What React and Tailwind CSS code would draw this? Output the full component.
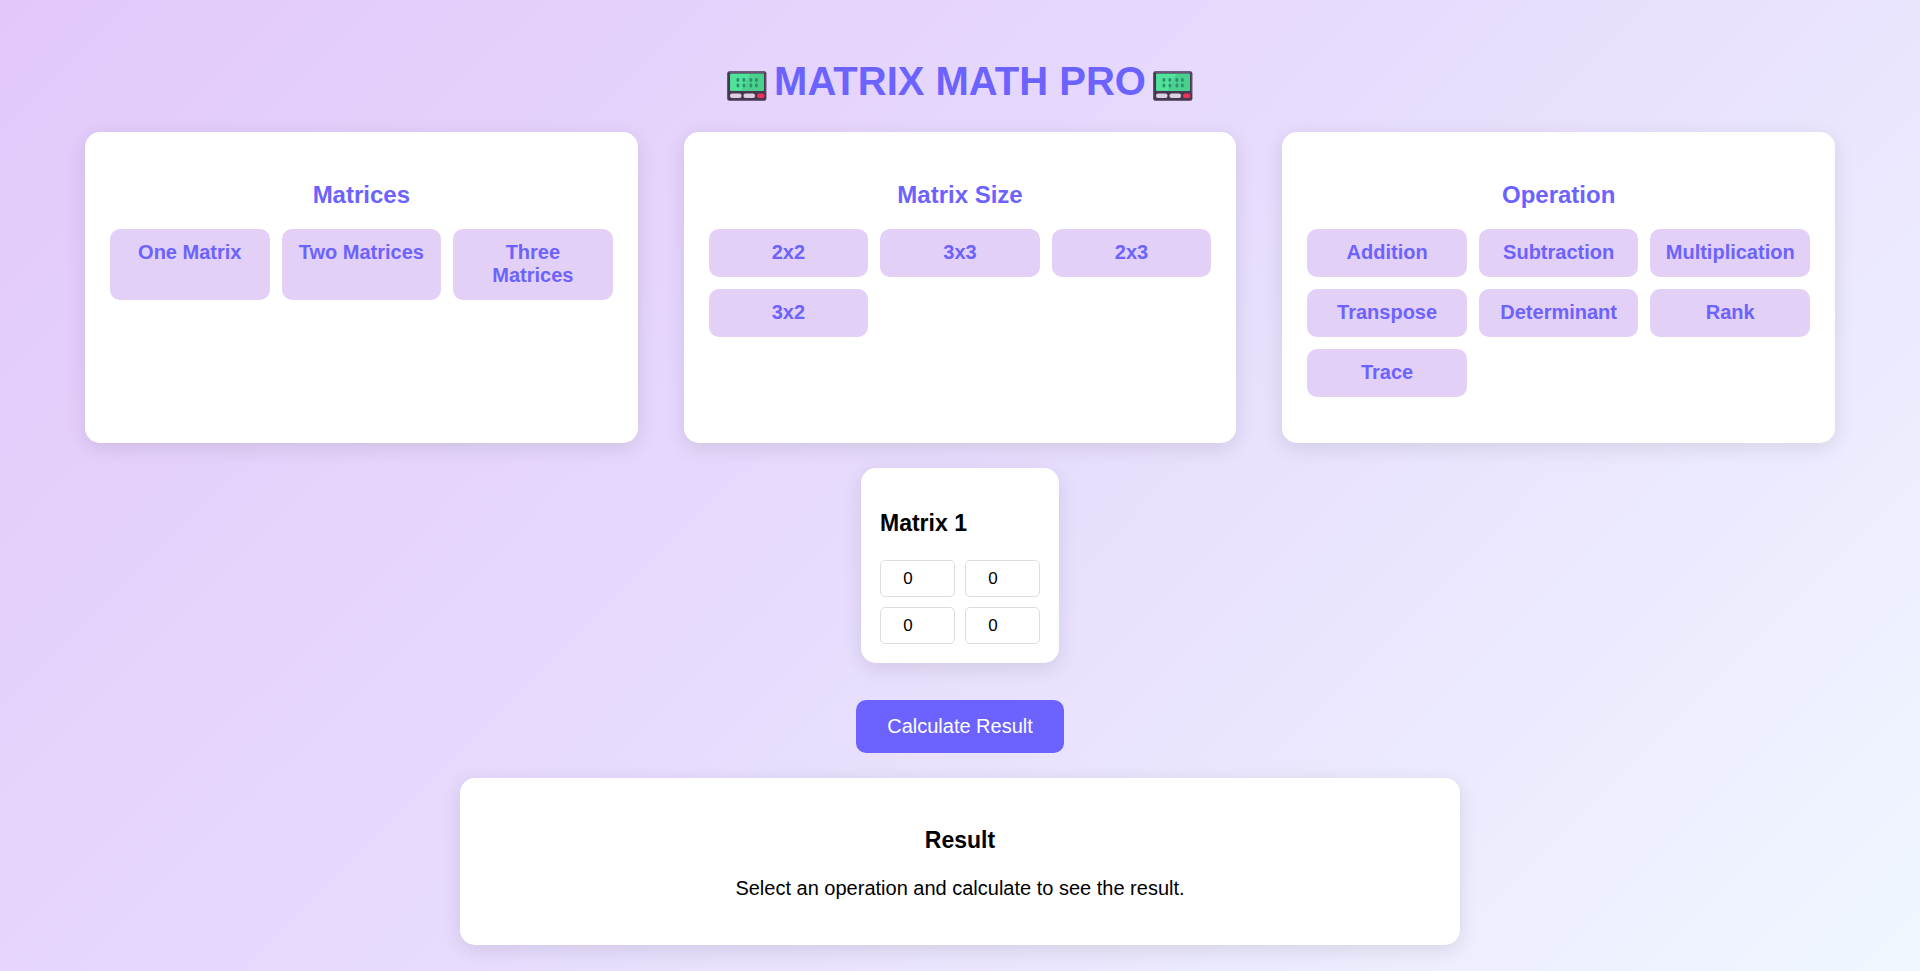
import { useState } from "react";

const groups = [
  { title: "Matrices", options: ["One Matrix", "Two Matrices", "Three Matrices"] },
  { title: "Matrix Size", options: ["2x2", "3x3", "2x3", "3x2"] },
  {
    title: "Operation",
    options: ["Addition", "Subtraction", "Multiplication", "Transpose", "Determinant", "Rank", "Trace"],
  },
];

const CalculatorIcon = () => (
  <svg className="mt-2.5 h-[30px] w-10" viewBox="0 0 40 30" aria-hidden="true">
    <rect x="0.2" y="0.2" width="39.2" height="29.6" rx="2.2" fill="#46384f" />
    <path d="M2 1.3h36" stroke="#75507b" strokeWidth="1.2" />
    <path d="M38.4 2v20" stroke="#644a70" strokeWidth="1" />
    <rect x="3" y="2.5" width="34" height="17.5" rx="1" fill="#49d08f" />
    <path d="M3.5 3h20l-9 16.5h-11z" fill="#4fe39b" />
    <g fill="#2f8f6c">
      {[9.5, 15.5, 22.5, 28].map((x) => (
        <g key={x}>
          <rect x={x} y="7" width="2.8" height="4" rx="1.4" />
          <rect x={x} y="12.5" width="2.8" height="4" rx="1.4" />
        </g>
      ))}
    </g>
    <rect x="3" y="22.5" width="11.5" height="4.5" rx="2" fill="#dccfe2" />
    <rect x="16.5" y="22.5" width="11.5" height="4.5" rx="2" fill="#dccfe2" />
    <rect x="30" y="22.5" width="7.5" height="4.5" rx="2.2" fill="#f0325a" />
  </svg>
);

const OptionCard = ({ title, options }) => (
  <section className="rounded-[15px] bg-white px-[25px] pb-[46px] pt-[49px] shadow-[0_5px_20px_rgba(0,0,0,0.1)]">
    <h2 className="text-center text-2xl font-bold leading-7 text-[#6c63ff]">{title}</h2>
    <div className="mt-5 grid grid-cols-3 gap-3">
      {options.map((option) => (
        <button
          key={option}
          type="button"
          className="flex cursor-pointer items-start justify-center rounded-[10px] bg-[#e2d0f6] px-3 pb-[13px] pt-3 text-center text-xl font-bold leading-[23px] text-[#6c63ff]"
        >
          {option}
        </button>
      ))}
    </div>
  </section>
);

export default function App() {
  const [cells, setCells] = useState([0, 0, 0, 0]);

  const updateCell = (index, value) => {
    setCells(cells.map((cell, i) => (i === index ? value : cell)));
  };

  return (
    <div className="flex min-h-screen flex-col items-center bg-[linear-gradient(135deg,#e2c8fa,#e7dcfd_50%,#f0f7ff)] px-[85px] pb-[25px] pt-[58px] font-['Liberation_Sans',Arial,sans-serif] text-xl leading-[23px] text-black">
      <h1 className="flex items-center gap-[7px] text-[40px] font-bold leading-[46px] text-[#6c63ff]">
        <CalculatorIcon />
        MATRIX MATH PRO
        <CalculatorIcon />
      </h1>

      <div className="mt-7 grid w-full grid-cols-3 gap-[46px]">
        {groups.map((group) => (
          <OptionCard key={group.title} {...group} />
        ))}
      </div>

      <section className="mt-[25px] rounded-[15px] bg-white px-[19px] pb-[19px] pt-[41px] shadow-[0_5px_20px_rgba(0,0,0,0.1)]">
        <h3 className="text-[23px] font-bold leading-7">Matrix 1</h3>
        <div className="mt-[23px] grid grid-cols-2 gap-2.5">
          {cells.map((cell, i) => (
            <input
              key={i}
              type="number"
              aria-label={`Matrix 1, row ${Math.floor(i / 2) + 1}, column ${(i % 2) + 1}`}
              value={cell}
              onChange={(e) => updateCell(i, e.target.value)}
              className="h-[37px] w-[75px] rounded-[5px] border border-[#dddddd] bg-white pl-2 pr-3 text-center text-[17px]"
            />
          ))}
        </div>
      </section>

      <button
        type="button"
        className="mt-[37px] cursor-pointer rounded-[10px] bg-[#6c63ff] px-[31px] py-[15px] text-xl leading-[23px] text-white"
      >
        Calculate Result
      </button>

      <section className="mt-[25px] w-full max-w-[1000px] rounded-[15px] bg-white pb-[45px] pt-12 text-center shadow-[0_5px_20px_rgba(0,0,0,0.1)]">
        <h3 className="text-[23px] font-bold leading-7">Result</h3>
        <p className="mt-[23px]">Select an operation and calculate to see the result.</p>
      </section>
    </div>
  );
}
